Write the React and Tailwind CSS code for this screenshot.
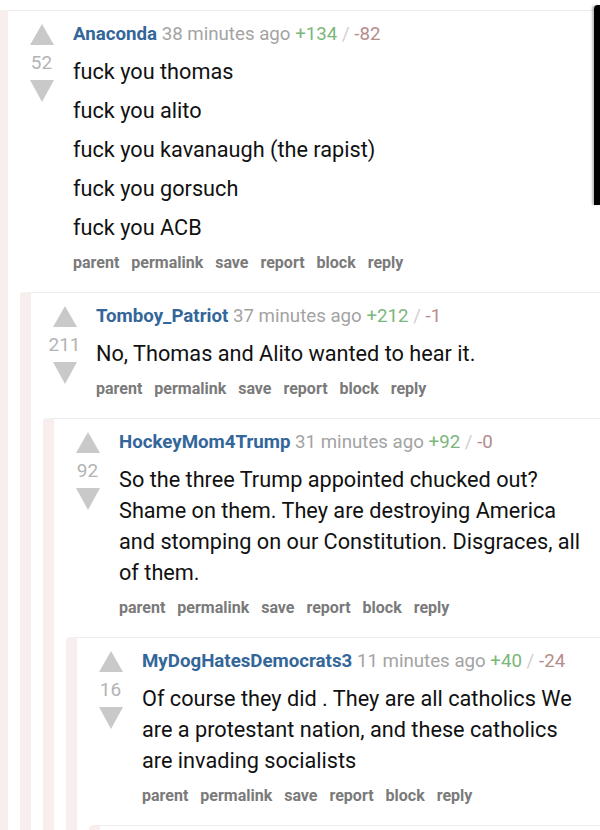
import React from "react";

const comments = {
  user: "Anaconda",
  age: "38 minutes ago",
  up: "+134",
  down: "-82",
  score: 52,
  body: ["fuck you thomas", "fuck you alito", "fuck you kavanaugh (the rapist)", "fuck you gorsuch", "fuck you ACB"],
  children: [
    {
      user: "Tomboy_Patriot",
      age: "37 minutes ago",
      up: "+212",
      down: "-1",
      score: 211,
      body: ["No, Thomas and Alito wanted to hear it."],
      children: [
        {
          user: "HockeyMom4Trump",
          age: "31 minutes ago",
          up: "+92",
          down: "-0",
          score: 92,
          body: [
            "So the three Trump appointed chucked out? Shame on them. They are destroying America and stomping on our Constitution. Disgraces, all of them.",
          ],
          children: [
            {
              user: "MyDogHatesDemocrats3",
              age: "11 minutes ago",
              up: "+40",
              down: "-24",
              score: 16,
              body: ["Of course they did . They are all catholics We are a protestant nation, and these catholics are invading socialists"],
              children: [null],
            },
          ],
        },
      ],
    },
  ],
};

const actions = ["parent", "permalink", "save", "report", "block", "reply"];

const Comment = ({ c }) => {
  // empty box = the next reply, cut off at the bottom of the screen
  if (!c) {
    return <div className="h-[60px] border-t border-[#ececec] border-l-[11px] border-l-[#f9eeee] rounded-tl-[4px]"></div>;
  }
  return (
    <div className="border-t border-[#ececec] border-l-[11px] border-l-[#f9eeee] rounded-tl-[4px] pt-[13px]">
      <div className="flex">
        {/* VOTES */}
        <div className="ml-[21px] w-[25px] flex flex-col items-center shrink-0">
          <div className="w-0 h-0 border-l-[12.5px] border-r-[12.5px] border-b-[21px] border-l-transparent border-r-transparent border-b-[#c9c9c9]"></div>
          <div className="mt-[7px] text-[19px] leading-[22px] text-[#b3b3b3]">{c.score}</div>
          <div className="mt-[6px] w-0 h-0 border-l-[12.5px] border-r-[12.5px] border-t-[22px] border-l-transparent border-r-transparent border-t-[#c9c9c9]"></div>
        </div>

        {/* CONTENT */}
        <div className="ml-[19px] pr-[12px] flex-1 min-w-0">
          <div className="text-[18.7px] leading-[20px] whitespace-nowrap">
            <span className="font-bold text-[#336699]">{c.user}</span>{" "}
            <span className="text-[#a3a3a3]">{c.age}</span>{" "}
            <span className="text-[#7bb67b]">{c.up}</span>{" "}
            <span className="text-[#d0d0d0]">/</span>{" "}
            <span className="text-[#b58c8c]">{c.down}</span>
          </div>
          <div className="mt-[12px] space-y-2">
            {c.body.map((p, i) => (
              <p key={i} className="text-[21.7px] leading-[31px] text-[#111111]">
                {p}
              </p>
            ))}
          </div>
          <div className="mt-[10px] flex gap-[12px] text-[16px] leading-[20px] font-bold text-[#7a7a7a]">
            {actions.map((a) => (
              <span key={a}>{a}</span>
            ))}
          </div>
        </div>
      </div>

      {c.children && (
        <div className="ml-[12px] mt-[19px]">
          {c.children.map((ch, i) => (
            <Comment key={i} c={ch} />
          ))}
        </div>
      )}
    </div>
  );
};

export default function App() {
  return (
    <div className="relative w-[600px] h-[830px] overflow-hidden bg-white font-['Roboto',sans-serif]">
      <div className="pt-[10px] ml-[-3px]">
        <Comment c={comments} />
      </div>
      {/* phone edge at the top right */}
      <div className="absolute right-0 top-[5px] w-[6px] h-[200px] bg-black rounded-tl-[4px] shadow-[-2px_0_2px_rgba(0,0,0,0.25)]"></div>
    </div>
  );
}
